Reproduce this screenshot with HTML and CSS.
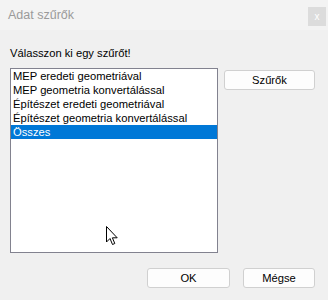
FILE: index.html
```html
<!DOCTYPE html>
<html>
<head>
<meta charset="utf-8">
<link rel="stylesheet" href="styles.css">
</head>
<body class="dlg">
  <div class="titlebar">
    <span class="title">Adat szűrők</span>
    <span class="close">x</span>
  </div>
  <div class="content">
    <div class="lab">Válasszon ki egy szűrőt!</div>
    <div class="row">
      <div class="listbox">
        <div class="item">MEP eredeti geometriával</div>
        <div class="item">MEP geometria konvertálással</div>
        <div class="item">Építészet eredeti geometriával</div>
        <div class="item">Építészet geometria konvertálással</div>
        <div class="item sel">Összes</div>
      </div>
      <div class="side">
        <div class="btn btn_side">Szűrők</div>
      </div>
    </div>
    <div class="footer">
      <div class="btn btn_ok">OK</div>
      <div class="btn btn_cancel">Mégse</div>
    </div>
  </div>
  <svg class="cursor" width="13" height="20" viewBox="0 0 13 20">
    <path d="M0.5 0.5 L0.5 16 L4 12.5 L6.5 18.5 L8.8 17.5 L6.4 11.8 L11.2 11.8 Z" fill="#fff" stroke="#000" stroke-width="1" stroke-linejoin="miter"/>
  </svg>
</body>
</html>
```

FILE: styles.css
```css
.dlg
{
  margin:0;
  width:328px;
  height:300px;
  background-color:#f0f0f0;
  font-family:"Liberation Sans", Arial, sans-serif;
  font-size:11.2px;
  color:#000;
  position:relative;
  overflow:hidden;
}
.titlebar
{
  height:30px;
  background-color:#f3f3f3;
  display:flex;
  align-items:center;
  justify-content:space-between;
  padding-left:8px;
  padding-right:2px;
  box-sizing:border-box;
}
.title
{
  color:#9a9a9a;
  font-size:12.5px;
}
.close
{
  width:18px;
  height:19px;
  margin-top:3px;
  background-color:#dcdcdc;
  color:#fff;
  font-size:10px;
  display:flex;
  align-items:center;
  justify-content:center;
}
.content
{
  padding:16px 13px 0 10px;
}
.lab
{
  height:14px;
  line-height:14px;
}
.row
{
  display:flex;
  margin-top:8px;
}
.listbox
{
  width:207px;
  height:183px;
  border:1px solid #82828f;
  background-color:#fff;
}
.item
{
  height:14px;
  line-height:14px;
  padding-left:2px;
  white-space:nowrap;
}
.sel
{
  background-color:#0078d7;
  color:#fff;
}
.side
{
  margin-left:6px;
  padding-top:2px;
}
.btn
{
  height:18px;
  line-height:18px;
  border:1px solid #d0d0d0;
  border-radius:3px;
  background-color:#fdfdfd;
  text-align:center;
}
.btn_side
{
  width:89px;
}
.footer
{
  display:flex;
  justify-content:flex-end;
  gap:13px;
  margin-top:15px;
}
.btn_ok
{
  width:81px;
}
.btn_cancel
{
  width:70px;
}
.cursor
{
  position:absolute;
  left:106px;
  top:226px;
}
```
